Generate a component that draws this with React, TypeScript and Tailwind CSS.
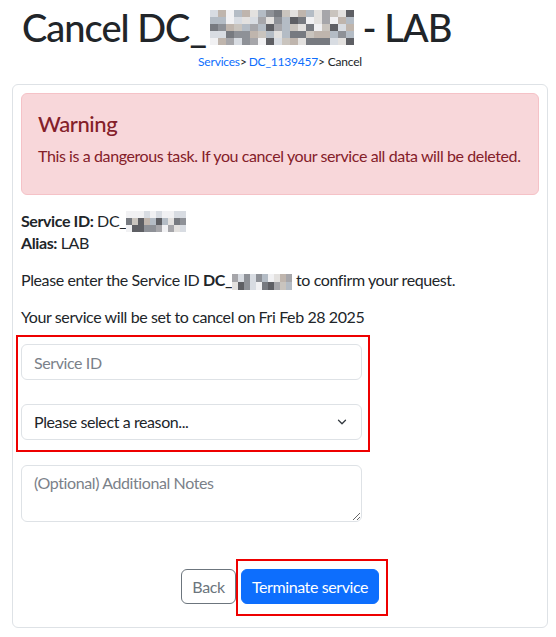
import { ChevronDown } from 'lucide-react';

// pixelated "redacted" blocks, drawn as svg rects
const shades = ['#f1f1f3', '#e3e1df', '#c9c4be', '#b4bcc5', '#a6a6aa', '#8e9197', '#777a80', '#5e5f64', '#d8dce2', '#bfb5ad'];

function Pixelated({ cols, rows, cell, cellH, seed, light = false }: { cols: number; rows: number; cell: number; cellH: number; seed: number; light?: boolean }) {
  let s = seed;
  const rand = () => {
    s = (s * 9301 + 49297) % 233280;
    return s / 233280;
  };
  const rects = [];
  for (let r = 0; r < rows; r++) {
    for (let c = 0; c < cols; c++) {
      let idx = Math.floor(rand() * shades.length);
      if (light && r === 0) idx = rand() > 0.5 ? 0 : 8;
      rects.push(<rect key={`${r}-${c}`} x={c * cell} y={r * cellH} width={cell} height={cellH} fill={shades[idx]} />);
    }
  }
  return (
    <svg width={cols * cell} height={rows * cellH} className="block" shapeRendering="crispEdges">
      {rects}
    </svg>
  );
}

export default function App() {
  return (
    <div className="min-h-[637px] bg-white font-['Lato',sans-serif] text-[16px] tracking-[-0.4px] text-[#212529]">
      <h1 className="px-[22px] pt-[3px] text-[38px] leading-[48px] font-medium tracking-[-1px] whitespace-nowrap">
        Cancel DC_
        <span className="inline-block ml-[4px] align-[-3px]">
          <Pixelated cols={18} rows={5} cell={8} cellH={7} seed={17} />
        </span>{' '}
        - LAB
      </h1>

      <div className="text-center text-[12px] leading-[16px] tracking-[-0.2px] mt-[3px] pl-[4px]">
        <a className="text-[#0d6efd]">Services</a>&gt;
        <a className="text-[#0d6efd] ml-[2px]">DC_1139457</a>&gt; Cancel
      </div>

      <div className="ml-3 mr-2 mt-[14px] border border-[#dee2e6] rounded-md p-2">
        <div className="border border-[#f5c2c7] bg-[#f8d7da] text-[#842029] rounded-md px-4 pt-[17px] pb-[26px]">
          <h4 className="text-[22px] leading-[26px] font-medium">Warning</h4>
          <p className="mt-[7px] leading-6 whitespace-nowrap">This is a dangerous task. If you cancel your service all data will be deleted.</p>
        </div>

        <div className="mt-[15px] leading-[22px]">
          <div>
            <b className="font-bold">Service ID:</b> DC_
            <span className="inline-block align-[-5px]">
              <Pixelated cols={10} rows={3} cell={6} cellH={7} seed={41} light />
            </span>
          </div>
          <div>
            <b className="font-bold">Alias:</b> LAB
          </div>
        </div>

        <p className="mt-[15px] leading-[22px]">
          Please enter the Service ID <b className="font-bold">DC_</b>
          <span className="inline-block align-[-4px] mr-[4px]">
            <Pixelated cols={10} rows={2} cell={6} cellH={8} seed={5} />
          </span>
          to confirm your request.
        </p>

        <p className="mt-[15px] leading-[22px]">Your service will be set to cancel on Fri Feb 28 2025</p>

        <div className="relative mt-[16px] w-[341px]">
          <div className="absolute -top-[9px] -left-[5px] -right-[8px] -bottom-[12px] border-2 border-[#ee0000] pointer-events-none" />
          <input
            type="text"
            placeholder="Service ID"
            className="block w-full h-[36px] px-3 border border-[#dee2e6] rounded-md bg-white text-[16px] placeholder:text-[#7b8189] outline-none"
          />
          <div className="relative mt-[24px]">
            <select className="block w-full h-[36px] pl-3 pr-9 border border-[#dee2e6] rounded-md bg-white text-[16px] text-[#212529] appearance-none outline-none">
              <option>Please select a reason...</option>
            </select>
            <ChevronDown className="absolute right-[13px] top-[11px] w-[14px] h-[14px] text-[#343a40] pointer-events-none" strokeWidth={2.2} />
          </div>
        </div>

        <textarea
          placeholder="(Optional) Additional Notes"
          className="block mt-[25px] w-[341px] h-[57px] px-3 py-[5px] border border-[#dee2e6] rounded-md text-[16px] leading-6 placeholder:text-[#7b8189] outline-none"
        />

        <div className="flex justify-center gap-[5px] mt-[47px] mb-[15px]">
          <button className="h-[35px] w-[55px] border border-[#6c757d] text-[#6c757d] rounded-md bg-white">Back</button>
          <div className="relative">
            <div className="absolute -top-[10px] -left-[5px] -right-[9px] -bottom-[12px] border-2 border-[#ee0000] pointer-events-none" />
            <button className="h-[35px] w-[138px] border border-[#0d6efd] bg-[#0d6efd] text-white rounded-md">Terminate service</button>
          </div>
        </div>
      </div>
    </div>
  );
}
